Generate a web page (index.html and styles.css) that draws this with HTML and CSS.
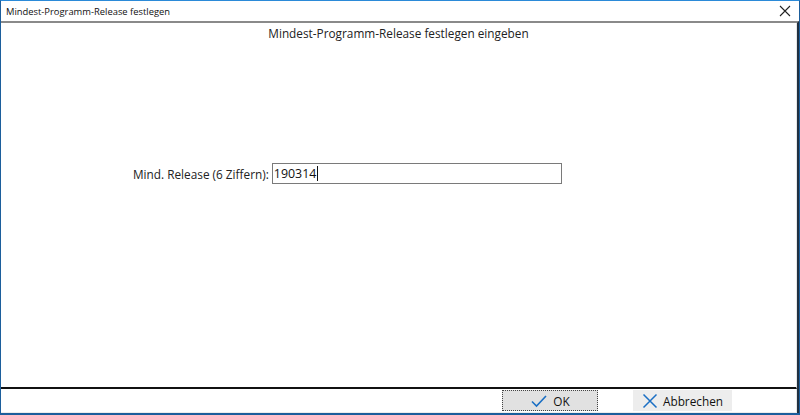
FILE: index.html
```html
<!DOCTYPE html>
<html>
  <head>
    <meta charset="utf-8">
    <title>Mindest-Programm-Release festlegen</title>
    <link rel="stylesheet" href="styles.css">
  </head>
  <body>
    <div class="window">
      <div class="titlebar">
        <span class="caption">Mindest-Programm-Release festlegen</span>
        <span class="close">
          <svg width="12" height="12" viewBox="0 0 12 12"><path d="M1 1 L11 11 M11 1 L1 11" stroke="#222" stroke-width="1.1" fill="none"/></svg>
        </span>
      </div>
      <div class="client">
        <div class="panel">
          <h1 class="heading">Mindest-Programm-Release festlegen eingeben</h1>
          <div class="field">
            <label class="label">Mind. Release (6 Ziffern):</label>
            <div class="input"><span>190314</span><i class="caret"></i></div>
          </div>
        </div>
        <div class="footer">
          <button class="btn default">
            <svg width="18" height="14" viewBox="0 0 18 14"><path d="M2 7.5 L6.5 12 L16 2" stroke="#1a6fc4" stroke-width="1.6" fill="none"/></svg>
            OK
          </button>
          <button class="btn">
            <svg width="16" height="16" viewBox="0 0 16 16"><path d="M1.5 1.5 L14.5 14.5 M14.5 1.5 L1.5 14.5" stroke="#1a6fc4" stroke-width="1.5" fill="none"/></svg>
            Abbrechen
          </button>
        </div>
      </div>
    </div>
  </body>
</html>
```

FILE: styles.css
```css
html, body {
  margin: 0;
  padding: 0;
}
body {
  width: 800px;
  height: 415px;
  font-family: "Open Sans", "Noto Sans", sans-serif;
  color: #1e1e1e;
  background: #fff;
}
.window {
  box-sizing: border-box;
  width: 800px;
  height: 415px;
  border: 1px solid #1c5e9c;
  border-top-color: #2b8ad8;
  border-bottom-width: 2px;
  display: flex;
  flex-direction: column;
}
.titlebar {
  height: 20px;
  display: flex;
  align-items: center;
  justify-content: space-between;
  padding: 0 7px 0 5px;
  font-size: 9.4px;
  color: #111;
}
.close {
  display: flex;
  width: 14px;
  height: 14px;
  align-items: center;
  justify-content: center;
}
.client {
  flex: 1;
  display: flex;
  flex-direction: column;
  border-top: 2px solid #8a8a8a;
  border-right: 2px solid #203040;
}
.panel {
  flex: 1;
  display: flex;
  flex-direction: column;
  align-items: center;
  border-right: 1px solid #e6e6e6;
  border-bottom: 2px solid #111;
}
.heading {
  margin: 2px 0 0 0;
  font-size: 11.8px;
  font-weight: normal;
  color: #222;
}
.field {
  display: flex;
  align-items: center;
  margin: 122px 0 0 0;
  align-self: flex-start;
  padding-left: 132px;
}
.label {
  font-size: 11.8px;
  margin-right: 3px;
  color: #222;
}
.input {
  box-sizing: border-box;
  width: 290px;
  height: 21px;
  border: 1px solid #7a7a7a;
  display: flex;
  align-items: center;
  padding-left: 1px;
  font-size: 12.4px;
  color: #111;
}
.caret {
  display: inline-block;
  width: 1px;
  height: 15px;
  background: #111;
  margin-left: 1px;
}
.footer {
  height: 23px;
  display: flex;
  align-items: center;
  padding-left: 501px;
  gap: 35px;
  border-bottom: 1px solid #ececec;
  border-right: 1px solid #e6e6e6;
}
.btn {
  font-family: inherit;
  font-size: 11.8px;
  color: #111;
  height: 21px;
  display: flex;
  align-items: center;
  justify-content: center;
  gap: 5px;
  border: 1px solid transparent;
  background: #ededed;
  width: 99px;
  padding: 0;
}
.btn.default {
  width: 96px;
  background: #e1e1e1;
  border: 1px dotted #444;
}
```
